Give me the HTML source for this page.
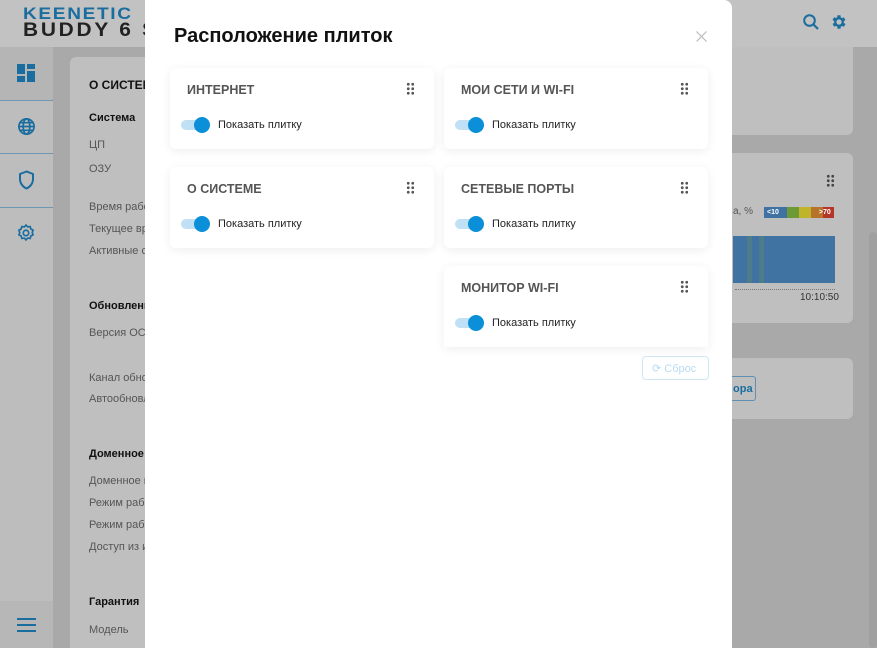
<!DOCTYPE html>
<html><head><meta charset="utf-8"><style>
*{box-sizing:border-box;margin:0;padding:0}
body{width:877px;height:648px;overflow:hidden;background:#a9a9a9;font-family:"Liberation Sans",Arial,sans-serif;position:relative}
.abs{position:absolute}
.hdr{left:0;top:0;width:877px;height:47px;background:#c2c2c2}
.side{left:0;top:47px;width:53px;height:601px;background:#bdbdbd}
.card{background:#bfbfbf;border-radius:6px}
.t{position:absolute;font-size:11px;color:#555}
.b{position:absolute;font-size:11px;font-weight:bold;color:#111}
.modal{left:145px;top:0;width:587px;height:648px;background:#fff;border-radius:0 8px 0 0}
.tile{position:absolute;width:264px;height:81px;background:#fff;border-radius:6px;box-shadow:0 2px 10px rgba(0,0,0,.07)}
.tile h3{position:absolute;left:17px;top:15px;font-size:12.5px;font-weight:bold;color:#555}
.dots{position:absolute;right:20px;top:14px;width:8px;height:13px;background:radial-gradient(circle,#555 1.3px,transparent 1.6px) 0 0/4.5px 4.5px}
.tg{position:absolute;left:11px;top:52px;width:28px;height:10px;border-radius:5px;background:#bfe0f5}
.tg:after{content:"";position:absolute;right:-1px;top:-3px;width:16px;height:16px;border-radius:50%;background:#0a8fd8}
.lb{position:absolute;left:48px;top:51px;font-size:11px;color:#222}
</style></head><body>
<div class="abs hdr"></div>
<div class="abs" style="left:23px;top:4px;font-size:17px;font-weight:bold;color:#1a6d9f;letter-spacing:1.5px;transform:scaleX(1.12);transform-origin:left">KEENETIC</div>
<div class="abs" style="left:23px;top:20px;font-size:19px;font-weight:bold;color:#222;letter-spacing:2.5px;transform:scaleX(1.1);transform-origin:left">BUDDY 6 S</div>
<svg class="abs" style="left:802px;top:13px" width="18" height="18" viewBox="0 0 18 18"><circle cx="7.5" cy="7.5" r="5.3" fill="none" stroke="#1a6d9f" stroke-width="2"/><path d="M11.5 11.5L16 16" stroke="#1a6d9f" stroke-width="2.2"/></svg>
<svg class="abs" style="left:830px;top:13px" width="18" height="18" viewBox="0 0 24 24"><path fill="#1a6d9f" d="M19.4 13a7.5 7.5 0 0 0 0-2l2.1-1.6-2-3.5-2.5 1a7 7 0 0 0-1.7-1L15 3h-4l-.4 2.7a7 7 0 0 0-1.7 1l-2.5-1-2 3.5L6.6 11a7.5 7.5 0 0 0 0 2l-2.1 1.6 2 3.5 2.5-1a7 7 0 0 0 1.7 1L11 21h4l.4-2.7a7 7 0 0 0 1.7-1l2.5 1 2-3.5zM13 15.5a3.5 3.5 0 1 1 0-7 3.5 3.5 0 0 1 0 7z" transform="translate(-1 0)"/></svg>
<div class="abs side"></div>
<div class="abs" style="left:0;top:47px;width:53px;height:53px;background:#b5b5b5"></div>
<svg class="abs" style="left:17px;top:64px" width="18" height="18"><rect x="0" y="0" width="8" height="10" fill="#1a6d9f"/><rect x="10" y="0" width="8" height="5" fill="#1a6d9f"/><rect x="10" y="7" width="8" height="11" fill="#1a6d9f"/><rect x="0" y="12" width="8" height="6" fill="#1a6d9f"/></svg>
<div class="abs" style="left:0;top:100px;width:53px;height:1px;background:#6e97b3"></div>
<svg class="abs" style="left:17px;top:117px" width="19" height="19" viewBox="0 0 20 20" fill="none" stroke="#1a6d9f" stroke-width="1.8"><circle cx="10" cy="10" r="8"/><ellipse cx="10" cy="10" rx="3.5" ry="8"/><path d="M2 10h16M3.5 6h13M3.5 14h13"/></svg>
<div class="abs" style="left:0;top:153px;width:53px;height:1px;background:#6e97b3"></div>
<svg class="abs" style="left:18px;top:170px" width="17" height="20" viewBox="0 0 17 20" fill="none" stroke="#1a6d9f" stroke-width="2"><path d="M8.5 1.5L2 4v5c0 4.5 3 8 6.5 9.5C12 17 15 13.5 15 9V4z"/></svg>
<div class="abs" style="left:0;top:207px;width:53px;height:1px;background:#6e97b3"></div>
<svg class="abs" style="left:16px;top:223px" width="20" height="20" viewBox="0 0 24 24" fill="none" stroke="#1a6d9f" stroke-width="2"><path d="M12 2.5l2 2.2 3-.4.8 2.9 2.7 1.4-1 2.8 1 2.8-2.7 1.4-.8 2.9-3-.4-2 2.2-2-2.2-3 .4-.8-2.9-2.7-1.4 1-2.8-1-2.8 2.7-1.4.8-2.9 3 .4z"/><circle cx="12" cy="12" r="3.3"/></svg>
<div class="abs" style="left:0;top:601px;width:53px;height:47px;background:#b7b7b7"></div>
<svg class="abs" style="left:17px;top:618px" width="19" height="14"><rect y="0" width="19" height="2" fill="#1a6d9f"/><rect y="6" width="19" height="2" fill="#1a6d9f"/><rect y="12" width="19" height="2" fill="#1a6d9f"/></svg>
<div class="abs card" style="left:70px;top:57px;width:100px;height:591px;border-radius:6px 6px 0 0"></div>
<div class="b" style="left:89px;top:78px;font-size:12px">О СИСТЕМ</div>
<div class="b" style="left:89px;top:112px">Система</div>
<div class="t" style="left:89px;top:139px">ЦП</div>
<div class="t" style="left:89px;top:163px">ОЗУ</div>
<div class="t" style="left:89px;top:201px">Время рабо</div>
<div class="t" style="left:89px;top:223px">Текущее вре</div>
<div class="t" style="left:89px;top:245px">Активные с</div>
<div class="b" style="left:89px;top:300px">Обновления</div>
<div class="t" style="left:89px;top:327px">Версия ОС</div>
<div class="t" style="left:89px;top:372px">Канал обно</div>
<div class="t" style="left:89px;top:393px">Автообновл</div>
<div class="b" style="left:89px;top:448px">Доменное и</div>
<div class="t" style="left:89px;top:475px">Доменное и</div>
<div class="t" style="left:89px;top:497px">Режим рабо</div>
<div class="t" style="left:89px;top:519px">Режим рабо</div>
<div class="t" style="left:89px;top:541px">Доступ из и</div>
<div class="b" style="left:89px;top:596px">Гарантия</div>
<div class="t" style="left:89px;top:624px">Модель</div>
<div class="abs card" style="left:700px;top:47px;width:153px;height:88px;border-radius:0 0 6px 6px"></div>
<div class="abs card" style="left:700px;top:153px;width:153px;height:170px"></div>
<div class="abs" style="left:826px;top:174px;width:8px;height:13px;background:radial-gradient(circle,#444 1.3px,transparent 1.6px) 0 0/4.5px 4.5px"></div>
<div class="t" style="left:733px;top:206px;font-size:10px">а, %</div>
<div class="abs" style="left:764px;top:207px;width:70px;height:11px;display:flex;font-size:7px;color:#fff;font-weight:bold;line-height:11px"><div style="width:23px;background:#3f72a2;padding-left:3px">&lt;10</div><div style="width:12px;background:#6d9a35"></div><div style="width:12px;background:#c0b52a"></div><div style="width:12px;background:#b8732a;text-align:right">&gt;</div><div style="width:11px;background:#b53528">70</div></div>
<div class="abs" style="left:733px;top:236px;width:102px;height:47px;background:#4173a2"></div>
<div class="abs" style="left:747px;top:236px;width:5px;height:47px;background:#4d7d8a"></div>
<div class="abs" style="left:759px;top:236px;width:5px;height:47px;background:#4d7d8a"></div>
<div class="abs" style="left:735px;top:289px;width:100px;height:1px;border-top:1px dotted #777"></div>
<div class="t" style="left:800px;top:292px;font-size:10px;color:#333">10:10:50</div>
<div class="abs card" style="left:700px;top:358px;width:153px;height:61px"></div>
<div class="abs" style="left:700px;top:376px;width:56px;height:25px;border:1px solid #5f8fb3;border-radius:3px;color:#1a6d9f;font-size:11px;font-weight:bold;padding:6px 0 0 32px">ора</div>
<div class="abs" style="left:869px;top:232px;width:8px;height:416px;background:#a0a0a0;border-radius:4px"></div>

<div class="abs modal">
<div class="abs" style="left:29px;top:25px;font-size:20px;font-weight:bold;color:#111">Расположение плиток</div>
<svg class="abs" style="left:551px;top:31px" width="11" height="11"><path d="M0.5 0.5L10.5 10.5M10.5 0.5L0.5 10.5" stroke="#bbb" stroke-width="1.2"/></svg>
<div class="tile" style="left:25px;top:68px"><h3>ИНТЕРНЕТ</h3><div class="dots"></div><div class="tg"></div><div class="lb">Показать плитку</div></div>
<div class="tile" style="left:299px;top:68px"><h3>МОИ СЕТИ И WI-FI</h3><div class="dots"></div><div class="tg"></div><div class="lb">Показать плитку</div></div>
<div class="tile" style="left:25px;top:167px"><h3>О СИСТЕМЕ</h3><div class="dots"></div><div class="tg"></div><div class="lb">Показать плитку</div></div>
<div class="tile" style="left:299px;top:167px"><h3>СЕТЕВЫЕ ПОРТЫ</h3><div class="dots"></div><div class="tg"></div><div class="lb">Показать плитку</div></div>
<div class="tile" style="left:299px;top:266px;height:81px;border-radius:6px 6px 0 0"><h3>МОНИТОР WI-FI</h3><div class="dots"></div><div class="tg"></div><div class="lb">Показать плитку</div></div>
<div class="abs" style="left:497px;top:356px;width:67px;height:24px;border:1px solid #cfe6f5;border-radius:4px;color:#b8dcf2;font-size:11px;padding:5px 0 0 9px">⟳ Сброс</div>
</div>
</body></html>
